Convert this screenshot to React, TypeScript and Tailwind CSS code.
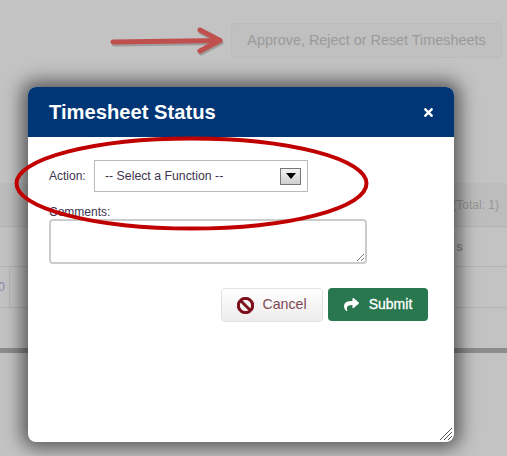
import React from "react";
import { FaBan, FaShare, FaTimes } from "react-icons/fa";

const App = () => {
  return (
    <div className="relative w-[507px] h-[456px] overflow-hidden bg-[#c3c3c3] font-['Liberation_Sans',Arial,sans-serif]">
      {/* Page behind the overlay */}
      <div className="flex justify-end pt-[23px] pr-[5px]">
        <div className="flex items-center justify-center w-[271px] h-[35px] rounded-[4px] border border-[#bbbbbb] bg-[#c0c0c0] text-[14.4px] text-[#9a9a9a]">
          Approve, Reject or Reset Timesheets
        </div>
      </div>
      <div className="mt-[125px] flex items-center justify-end h-[43px] pr-[8px] bg-[#bdbdbd] text-[12px] text-[#959595]">
        (Total: 1)
      </div>
      <div className="flex items-center justify-end h-[41px] pr-[44px] border-y border-[#b3b3b3] text-[12px] font-bold text-[#8f8f8f]">
        s
      </div>
      <div className="flex items-center h-[41px] border-b border-[#b3b3b3] text-[12px] text-[#8d87a8]">
        <span className="w-[10px] h-full border-r border-[#b5b5b5] flex items-center justify-end pr-[4px]">0</span>
      </div>
      <div className="mt-[40px] h-[5px] bg-[#8c8c8c]" />

      {/* Annotation arrow */}
      <svg className="absolute left-[105px] top-[22px]" width="125" height="40" viewBox="0 0 125 40" fill="none">
        <g stroke="#6f6f6f" strokeOpacity="0.45" strokeWidth="5" strokeLinecap="round" strokeLinejoin="round" transform="translate(1 2)">
          <path d="M8 20 L115 18.5 M95 8 L115 18.5 L95 29" />
        </g>
        <path d="M8 20 L115 18.5 M95 8 L115 18.5 L95 29" stroke="#c0504d" strokeWidth="5" strokeLinecap="round" strokeLinejoin="round" />
      </svg>

      {/* Modal */}
      <div className="absolute left-[28px] top-[87px] w-[426px] h-[355px] flex flex-col rounded-[8px] overflow-hidden bg-white shadow-[0_0_18px_6px_rgba(0,0,0,0.55)]">
        <div className="flex items-center justify-between h-[50px] shrink-0 bg-[#003676] pl-[21px] pr-[19px]">
          <span className="text-[20.2px] font-bold text-white">Timesheet Status</span>
          <FaTimes className="text-white" size={13} />
        </div>
        <div className="flex flex-col pl-[21px] pr-[88px] pt-[23px]">
          <div className="flex items-center text-[12px] text-[#3c3550]">
            <span className="w-[45px]">Action:</span>
            <div className="flex items-center justify-between w-[214px] h-[32px] border border-[#b9b9b9] pl-[10px] pr-[6px] text-[12.3px]">
              <span>-- Select a Function --</span>
              <div className="flex items-center justify-center w-[21px] h-[17px] border border-[#777777] bg-gradient-to-b from-[#f2f2f2] to-[#cfcfcf]">
                <div className="w-0 h-0 border-x-[5px] border-x-transparent border-t-[6px] border-t-black" />
              </div>
            </div>
          </div>
          <div className="mt-[13px] text-[12px] leading-[15px] text-[#3c3550]">Comments:</div>
          <div className="relative mt-[-1px] h-[45px] w-[318px] rounded-[4px] border-2 border-[#cccccc]">
            <svg className="absolute right-0 bottom-0" width="9" height="9" viewBox="0 0 9 9" stroke="#777777" strokeWidth="1">
              <path d="M1 8 L8 1 M5 8 L8 5" />
            </svg>
          </div>
        </div>
        <div className="flex justify-end gap-[5px] pr-[26px] mt-[24px]">
          <div className="flex items-center justify-center gap-[8px] w-[102px] h-[34px] rounded-[4px] border border-[#e2e2e2] bg-gradient-to-b from-white to-[#ececec] text-[14.2px] text-[#7f4a55]">
            <FaBan className="text-[#7a0c18]" size={17} stroke="currentColor" strokeWidth={30} />
            <span>Cancel</span>
          </div>
          <div className="flex items-center justify-center gap-[10px] w-[100px] h-[33px] rounded-[4px] bg-[#29774e] text-[14px] text-white">
            <FaShare size={15} />
            <span className="[-webkit-text-stroke:0.3px_white]">Submit</span>
          </div>
        </div>
        <svg className="absolute right-[1px] bottom-[1px]" width="14" height="14" viewBox="0 0 14 14" stroke="#555555" strokeWidth="1">
          <path d="M1 13 L13 1 M5 13 L13 5 M9 13 L13 9" />
        </svg>
      </div>

      {/* Annotation ellipse */}
      <svg className="absolute left-0 top-0 pointer-events-none" width="507" height="456" viewBox="0 0 507 456" fill="none">
        <ellipse cx="191.5" cy="183.5" rx="175" ry="45" stroke="#c00000" strokeWidth="4" />
      </svg>
    </div>
  );
};

export default App;
